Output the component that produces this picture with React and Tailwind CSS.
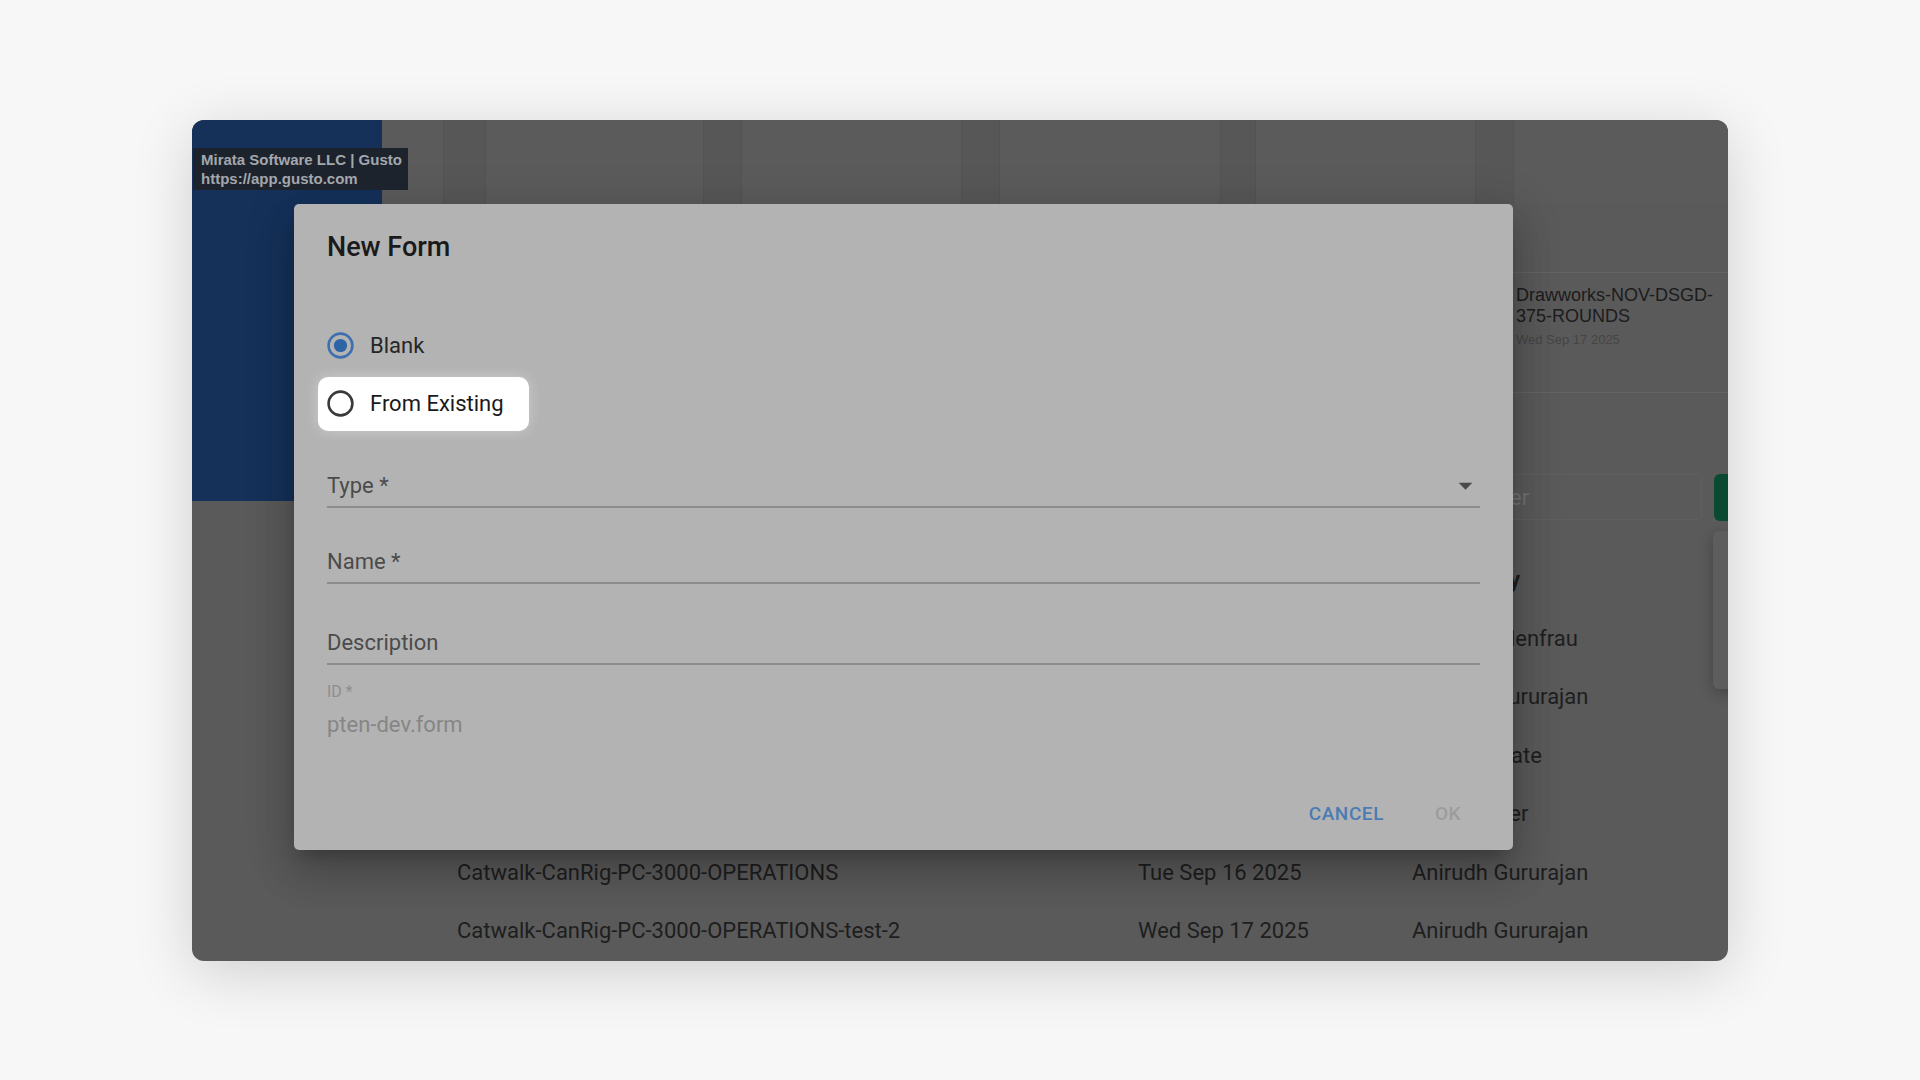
import React from "react";

// background page columns (header strip): spacer, then band/card pairs
const headerCols = [
  { w: "w-[61px]", band: false },
  { w: "w-[43px]", band: true },
  { w: "w-[217px]", band: false },
  { w: "w-[39px]", band: true },
  { w: "w-[219px]", band: false },
  { w: "w-[39px]", band: true },
  { w: "w-[220px]", band: false },
  { w: "w-[36px]", band: true },
  { w: "w-[219px]", band: false },
  { w: "w-[39px]", band: true },
];

const rows = [
  { name: "Drawworks-NOV-DSGD-375-ROUNDS", date: "Wed Sep 17 2025", owner: "Maria Wallenfrau" },
  { name: "Catwalk-CanRig-PC-3000-INSPECTION", date: "Mon Sep 15 2025", owner: "Anirudh Gururajan" },
  { name: "Iron-Roughneck-ST-80-CHECKLIST", date: "Fri Sep 12 2025", owner: "Mo Westgate" },
  { name: "Top-Drive-TDS-11SA-ROUNDS", date: "Thu Sep 11 2025", owner: "Ryan Ferrier" },
  { name: "Catwalk-CanRig-PC-3000-OPERATIONS", date: "Tue Sep 16 2025", owner: "Anirudh Gururajan" },
  { name: "Catwalk-CanRig-PC-3000-OPERATIONS-test-2", date: "Wed Sep 17 2025", owner: "Anirudh Gururajan" },
];

const Radio = ({ checked }) => (
  <svg width="27" height="27" viewBox="0 0 27 27" className="shrink-0">
    <circle
      cx="13.5"
      cy="13.5"
      r="11.9"
      fill="none"
      stroke={checked ? "#3d70ae" : "#3a3a3a"}
      strokeWidth="2.6"
    />
    {checked && <circle cx="13.5" cy="13.5" r="6.6" fill="#2d64a6" />}
  </svg>
);

const Field = ({ label, select, mt }) => (
  <div className={`${mt} flex items-center justify-between border-b-2 border-[#8c8c8c] pb-[6px]`}>
    <span className="text-[22px] leading-[28px] text-[#4b4b4b]">{label}</span>
    {select && (
      <svg width="33" height="33" viewBox="0 0 24 24" className="-my-[3px] mr-[-2px]">
        <path d="M7 10l5 5 5-5z" fill="#4a4a4a" />
      </svg>
    )}
  </div>
);

const App = () => {
  return (
    <div className="flex h-screen w-full items-center justify-center bg-[#f7f7f7] font-['Roboto',sans-serif]">
      <div className="relative flex h-[841px] w-[1536px] overflow-hidden rounded-[12px] bg-[#5a5a5a] shadow-[0_12px_60px_rgba(0,0,0,0.16)]">
        {/* left sidebar */}
        <div className="w-[190px] shrink-0">
          <div className="h-[381px] bg-[#15315a]"></div>
        </div>

        {/* main page behind the dialog */}
        <div className="flex min-w-0 flex-1 flex-col">
          <div className="flex h-[84px] shrink-0">
            {headerCols.map((c, i) => (
              <div
                key={i}
                className={`${c.w} shrink-0 ${c.band ? "border-x border-[#535353] bg-[#575757]" : "bg-[#5b5b5b]"}`}
              ></div>
            ))}
            <div className="flex-1 bg-[#5b5b5b]"></div>
          </div>

          <div className="mt-[68px] flex h-[121px] shrink-0 border-y border-[#646464]">
            <div className="w-[1132px] shrink-0"></div>
            <div className="flex-1 pl-[2px] pt-[12px] font-['Liberation_Sans',Arial,sans-serif]">
              <div className="w-[210px] text-[18px] leading-[21px] text-[#1c1c1c]">Drawworks-NOV-DSGD-375-ROUNDS</div>
              <div className="mt-[5px] text-[13px] leading-[16px] text-[#454545]">Wed Sep 17 2025</div>
            </div>
          </div>

          <div className="mt-[81px] flex h-[47px] shrink-0 items-center justify-end">
            <div className="mr-[12px] flex h-[46px] w-[240px] items-center rounded-[4px] border border-[#5f5f5f] pl-[17px] text-[22px] text-[#727272]">
              Filter
            </div>
            <div className="-mr-[76px] h-[47px] w-[90px] shrink-0 rounded-[6px] bg-[#0b4a32]"></div>
          </div>

          <div className="mt-[30px] flex flex-col text-[22px] text-[#1e1e1e]">
            <div className="grid h-[58.5px] grid-cols-[681px_274px_1fr] items-center pl-[75px] font-bold">
              <span>Name</span>
              <span>Created</span>
              <span>Created By</span>
            </div>
            {rows.map((r, i) => (
              <div key={i} className="grid h-[58.5px] grid-cols-[681px_274px_1fr] items-center pl-[75px]">
                <span className="whitespace-nowrap">{r.name}</span>
                <span className="whitespace-nowrap">{r.date}</span>
                <span className="whitespace-nowrap">{r.owner}</span>
              </div>
            ))}
          </div>
        </div>

        {/* half-hidden popup at the right edge */}
        <div className="absolute left-[1521px] top-[411px] h-[158px] w-[200px] rounded-[6px] bg-[#5d5d5d] shadow-[0_4px_14px_rgba(0,0,0,0.25)]"></div>

        {/* browser tooltip */}
        <div className="absolute left-[1px] top-[28px] z-20 w-[215px] bg-[#1d232c] px-[8px] py-[2px] font-['Liberation_Sans',Arial,sans-serif] text-[15px] font-bold leading-[19px] text-[#a3a7ae]">
          <div className="whitespace-nowrap">Mirata Software LLC | Gusto</div>
          <div className="whitespace-nowrap">https://app.gusto.com</div>
        </div>

        {/* New Form dialog */}
        <div className="absolute left-[102px] top-[84px] z-10 flex h-[646px] w-[1219px] flex-col rounded-[5px] bg-[#b3b3b3] px-[33px] shadow-[0_11px_15px_-7px_rgba(0,0,0,0.2),0_24px_38px_3px_rgba(0,0,0,0.14),0_9px_46px_8px_rgba(0,0,0,0.12)]">
          <h2 className="pt-[27px] text-[27px] font-medium leading-[32px] text-[#1a1a1a]">New Form</h2>

          <div className="mt-[54px] flex flex-col">
            <div className="flex h-[58px] items-center gap-[16px]">
              <Radio checked />
              <span className="text-[22px] text-[#262626]">Blank</span>
            </div>
            <div className="flex h-[58px] items-center">
              <div className="-ml-[9px] flex h-[54px] items-center gap-[16px] rounded-[10px] bg-white pl-[9px] pr-[25px] shadow-[0_0_14px_rgba(255,255,255,0.35)]">
                <Radio />
                <span className="text-[22px] text-[#1a1a1a]">From Existing</span>
              </div>
            </div>
          </div>

          <Field label="Type *" select mt="mt-[39px]" />
          <Field label="Name *" mt="mt-[40px]" />
          <Field label="Description" mt="mt-[45px]" />

          <div className="mt-[17px] text-[16px] leading-[20px] text-[#8e8e8e]">ID *</div>
          <div className="mt-[9px] text-[22px] leading-[28px] text-[#868686]">pten-dev.form</div>

          <div className="mt-auto -mr-[12px] flex justify-end gap-[9px] pb-[17px]">
            <button className="h-[36px] min-w-[88px] px-[11px] text-[19px] font-medium tracking-[0.03em] text-[#4b7bb3]">
              CANCEL
            </button>
            <button className="h-[36px] min-w-[88px] px-[11px] text-[19px] font-medium tracking-[0.03em] text-[#9c9c9c]">
              OK
            </button>
          </div>
        </div>
      </div>
    </div>
  );
};

export default App;
